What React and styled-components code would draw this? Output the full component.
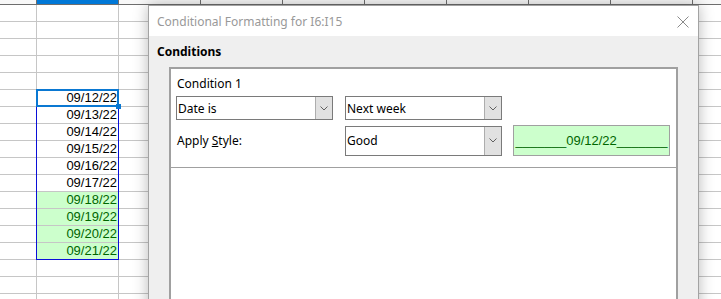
import styled, { createGlobalStyle } from 'styled-components';

const GlobalStyle = createGlobalStyle`
  html, body {
    margin: 0;
    padding: 0;
    width: 721px;
    height: 299px;
    overflow: hidden;
    background: #ffffff;
  }
`;

const Screen = styled.div`
  position: relative;
  width: 721px;
  height: 299px;
  overflow: hidden;
  font-family: 'Liberation Sans', Arial, sans-serif;
`;

// spreadsheet grid
const Sheet = styled.div`
  display: grid;
  grid-template-columns: 37px repeat(9, 82px);
  grid-template-rows: 5px;
  grid-auto-rows: 17px;
`;

const HeadCell = styled.div`
  box-sizing: border-box;
  border-right: 1px solid #6e6e6e;
  border-bottom: 1px solid #6e6e6e;
  background: ${(p) => (p.$active ? '#0078d7' : '#f8f8f8')};
`;

const Cell = styled.div`
  box-sizing: border-box;
  border-right: 1px solid #c6c6c6;
  border-bottom: 1px solid #c6c6c6;
  background: ${(p) => (p.$good ? '#ccffcc' : '#ffffff')};
  color: ${(p) => (p.$good ? '#006600' : '#000000')};
  font-size: 13px;
  line-height: 16px;
  text-align: right;
  padding-right: 1px;
  white-space: nowrap;
  overflow: hidden;
`;

const Range = styled.div`
  position: absolute;
  left: 36px;
  top: 89px;
  width: 83px;
  height: 171px;
  box-sizing: border-box;
  border: 1px solid #0a10d8;
  pointer-events: none;
`;

const CellCursor = styled.div`
  position: absolute;
  left: 36px;
  top: 89px;
  width: 83px;
  height: 18px;
  box-sizing: border-box;
  border: 2px solid #0a78d2;

  &::after {
    content: '';
    position: absolute;
    right: -4px;
    bottom: -4px;
    width: 5px;
    height: 5px;
    background: #0a78d2;
  }
`;

// dialog
const Dialog = styled.div`
  position: absolute;
  left: 148px;
  top: 5px;
  width: 551px;
  height: 320px;
  box-sizing: border-box;
  border: 1px solid #a3a3a3;
  background: #efefef;
  box-shadow: 0 0 14px rgba(0, 0, 0, 0.28);
  font-family: 'Noto Sans', 'Segoe UI', sans-serif;
  font-size: 12px;
  color: #000;
  display: flex;
  flex-direction: column;
`;

const TitleBar = styled.div`
  height: 30px;
  background: #ffffff;
  display: flex;
  align-items: center;
  justify-content: space-between;
  padding: 0 9px 0 8px;
  color: #999999;
  font-size: 12px;
`;

const CloseIcon = styled.svg`
  width: 12px;
  height: 12px;
  margin-top: 1px;
`;

const Body = styled.div`
  flex: 1;
  padding: 8px 20px 0 8px;
  display: flex;
  flex-direction: column;
`;

const SectionTitle = styled.div`
  font-weight: bold;
  line-height: 16px;
  margin-bottom: 7px;
`;

const Frame = styled.div`
  margin-left: 12px;
  flex: 1;
  border: 2px solid #a0a0a0;
  border-bottom: none;
  background: #ffffff;
`;

const Entry = styled.div`
  border-bottom: 1px solid #a0a0a0;
  padding: 7px 0 11px 5px;
  display: flex;
  flex-direction: column;
`;

const EntryTitle = styled.div`
  line-height: 16px;
  margin-bottom: 4px;
  padding-left: 1px;
`;

const Row = styled.div`
  display: flex;
  align-items: center;
  margin-bottom: ${(p) => p.$gap || 0}px;
`;

const FieldLabel = styled.div`
  width: 169px;
  padding-left: 1px;
  box-sizing: border-box;
`;

const Select = styled.div`
  box-sizing: border-box;
  width: 157px;
  height: ${(p) => p.$h}px;
  margin-right: ${(p) => (p.$tight ? 11 : 12)}px;
  border: 1px solid #7a7a7a;
  background: #ffffff;
  display: flex;
  align-items: stretch;
`;

const SelectText = styled.div`
  flex: 1;
  display: flex;
  align-items: center;
  padding-left: 1px;
`;

const SelectButton = styled.div`
  width: 16px;
  background: #e1e1e1;
  border-left: 1px solid #adadad;
  display: flex;
  align-items: center;
  justify-content: center;
`;

const Preview = styled.div`
  box-sizing: border-box;
  width: 157px;
  height: 31px;
  border: 1px solid #a0a0a0;
  background: #ccffcc;
  color: #006600;
  font-family: 'Liberation Sans', Arial, sans-serif;
  font-size: 13px;
  display: flex;
  align-items: center;
  justify-content: center;
  white-space: nowrap;
  overflow: hidden;
`;

const Chevron = () => (
  <svg width="8" height="5" viewBox="0 0 8 5">
    <path d="M0.5 0.5 L4 4 L7.5 0.5" fill="none" stroke="#606060" strokeWidth="1" />
  </svg>
);

const dates = ['09/12/22', '09/13/22', '09/14/22', '09/15/22', '09/16/22', '09/17/22', '09/18/22', '09/19/22', '09/20/22', '09/21/22'];

export default function App() {
  const rows = [];
  for (let r = 1; r <= 18; r++) {
    for (let c = 0; c < 10; c++) {
      const i = r - 6;
      const hasDate = c === 1 && i >= 0 && i < dates.length;
      rows.push(
        <Cell key={`${r}-${c}`} $good={hasDate && i >= 6}>
          {hasDate ? dates[i] : ''}
        </Cell>
      );
    }
  }

  return (
    <Screen>
      <GlobalStyle />
      <Sheet>
        {Array.from({ length: 10 }).map((_, c) => (
          <HeadCell key={c} $active={c === 1} />
        ))}
        {rows}
      </Sheet>
      <Range />
      <CellCursor />

      <Dialog>
        <TitleBar>
          <span>Conditional Formatting for I6:I15</span>
          <CloseIcon viewBox="0 0 12 12">
            <path d="M0.5 0.5 L11.5 11.5 M11.5 0.5 L0.5 11.5" stroke="#8a8a8a" strokeWidth="1" />
          </CloseIcon>
        </TitleBar>
        <Body>
          <SectionTitle>Conditions</SectionTitle>
          <Frame>
            <Entry>
              <EntryTitle>Condition 1</EntryTitle>
              <Row $gap={5}>
                <Select $h={24}>
                  <SelectText>Date is</SelectText>
                  <SelectButton><Chevron /></SelectButton>
                </Select>
                <Select $h={24}>
                  <SelectText>Next week</SelectText>
                  <SelectButton><Chevron /></SelectButton>
                </Select>
              </Row>
              <Row>
                <FieldLabel>
                  Apply <u>S</u>tyle:
                </FieldLabel>
                <Select $h={30} $tight>
                  <SelectText>Good</SelectText>
                  <SelectButton><Chevron /></SelectButton>
                </Select>
                <Preview>_______09/12/22_______</Preview>
              </Row>
            </Entry>
          </Frame>
        </Body>
      </Dialog>
    </Screen>
  );
}
